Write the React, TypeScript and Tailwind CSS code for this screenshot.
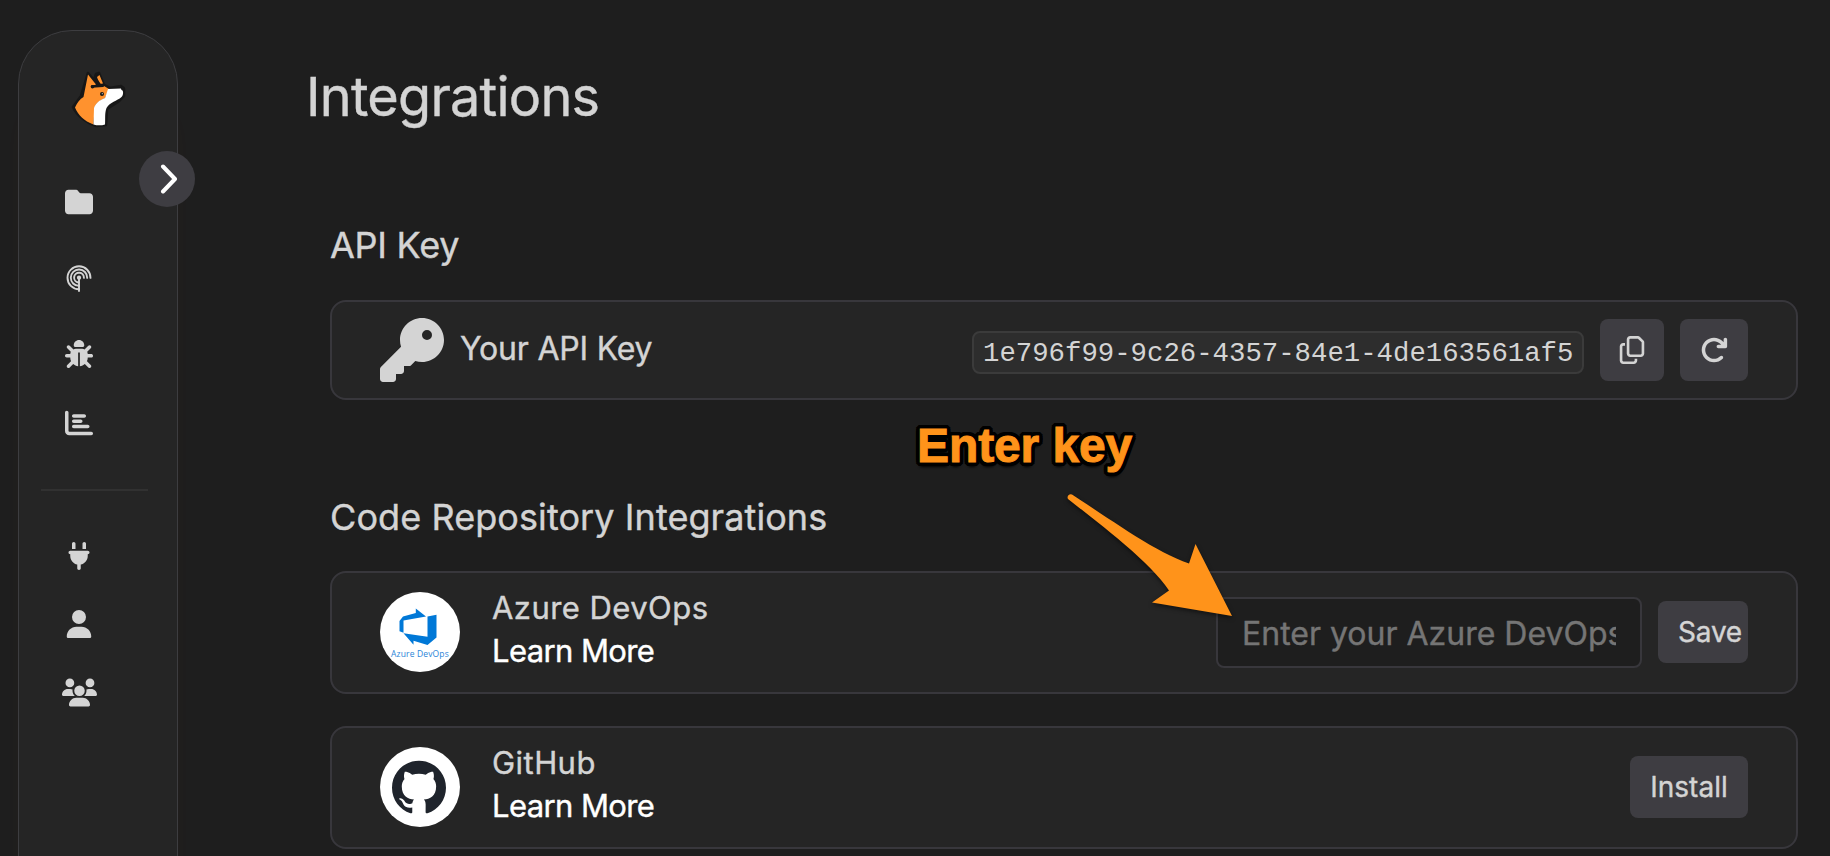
import type { ReactNode } from "react";
import {
  FaArrowRotateRight,
  FaBug,
  FaChartBar,
  FaFolder,
  FaKey,
  FaPlug,
  FaRegCopy,
  FaUser,
  FaUsers,
} from "react-icons/fa6";
import { SiGithub } from "react-icons/si";

function FoxLogo() {
  return (
    <svg width="56" height="60" viewBox="70 69 56 60" className="block">
      <path
        d="M88 73 L94 80 L96 74 L99 73 L104 85 L110 88 L121 86 L124 89 L124 96 L118 102 L107 109 L106 125 L96 126 C87 123 77 116 73 107 L81 96 Z"
        fill="#171717"
        stroke="#171717"
        strokeWidth="2.600"
        strokeLinejoin="round"
      />
      <path
        d="M88 74.500 L96 84.500 L92 86 L104 86 L109 89 L105 98 C98 101 95 105 94.500 108 L93.500 124.500 C84 121 78 115 75 107.500 C77 103 80 99 83.500 97 Z"
        fill="#ff922e"
      />
      <path d="M97 77 L99.500 75 L103 83.500 L99.500 84 Z" fill="#ff922e" />
      <path
        d="M108 89 L121 88.500 C124 91 123.500 95 121.500 97 C117 101 110 102 106.500 108 C104.500 113 105.500 119 105 124.500 C101 125.800 97 125.500 93.500 124.500 L94 108 C95 104 100 99.500 105 98 Z"
        fill="#fff"
      />
      <path d="M92 86.500 L103 85.700 M96.500 80 L100 85" stroke="#171717" strokeWidth="2.400" fill="none" strokeLinecap="round" />
      <circle cx="92.500" cy="86.700" r="1.800" fill="#171717" />
      <circle cx="102" cy="94" r="2" fill="#171717" />
      <circle cx="102.300" cy="93.700" r="0.600" fill="#ccc" />
      <circle cx="123" cy="88.500" r="2" fill="#171717" />
    </svg>
  );
}

function RadarIcon() {
  return (
    <svg width="28" height="28" viewBox="0 0 28 28" fill="none" stroke="currentColor" strokeWidth="1.900" strokeLinecap="round">
      <path d="M14 25.300 A11.500 11.500 0 1 1 25.500 13.900" />
      <path d="M14 21.900 A8.200 8.200 0 1 1 22.200 13.900" />
      <path d="M13.500 18.500 A4.900 4.900 0 1 1 18.900 13.900" />
      <circle cx="14" cy="13.700" r="1.200" fill="currentColor" />
      <path d="M14 14 V27" />
    </svg>
  );
}

function AzureLogo() {
  return (
    <div className="flex h-20 w-20 flex-col items-center rounded-full bg-white pt-4">
      <svg width="38" height="38" viewBox="0 0 38 38" className="mr-1 block shrink-0" fill="#0078d7">
        <path d="M0.500 13 L4 8.500 L16.800 5 L16.800 0.500 L27 8.500 L4.500 12.500 L4.500 24.700 L0.500 23.300 Z" />
        <path d="M28.500 8.500 L37.500 6.800 L37.500 29.500 L28.500 37 L14.500 32.700 L14.500 36.700 L4.500 25.300 L28.500 28.700 Z" />
      </svg>
      <span className="mt-[2px] font-['Open_Sans',sans-serif] text-[8.5px] leading-[11px] tracking-[0.15px] whitespace-nowrap text-[#2b85d8] [-webkit-text-stroke:0]">
        Azure DevOps
      </span>
    </div>
  );
}

function GithubLogo() {
  return (
    <div className="flex h-20 w-20 items-center justify-center rounded-full bg-white pt-[1px] pr-[3px] text-[#1f242c]">
      <SiGithub size={54} />
    </div>
  );
}

function NavItem({ className, children }: { className: string; children: ReactNode }) {
  return <a className={`flex h-7 w-9 items-center justify-center ${className}`}>{children}</a>;
}

function Sidebar() {
  return (
    <aside className="relative mt-[30px] ml-[18px] h-[900px] w-40 shrink-0 rounded-t-[54px] border border-[#3d3d40] bg-[#252525] shadow-[0_60px_14px_rgba(255,120,60,0.03)]">
      <div className="mt-[38px] ml-[51px]">
        <FoxLogo />
      </div>
      <button className="absolute top-[120px] left-[120px] flex h-14 w-14 items-center justify-center rounded-full bg-[#3e3d42]">
        <svg width="20" height="30" viewBox="0 0 20 30" fill="none" stroke="#fff" strokeWidth="4" strokeLinecap="round" strokeLinejoin="round">
          <path d="M6 2.500 L18 15 L6 27.500" />
        </svg>
      </button>
      <nav className="ml-[42px] flex flex-col text-[#d4d4d4]">
        <NavItem className="mt-[59px]"><FaFolder size={28} /></NavItem>
        <NavItem className="mt-[48px]"><RadarIcon /></NavItem>
        <NavItem className="mt-[48px]"><FaBug size={28} /></NavItem>
        <NavItem className="mt-[41px]"><FaChartBar size={28} /></NavItem>
      </nav>
      <div className="mt-[52px] ml-[22px] h-[2px] w-[107px] bg-[#313131]" />
      <nav className="ml-[42px] flex flex-col text-[#d4d4d4]">
        <NavItem className="mt-[51px]"><FaPlug size={28} /></NavItem>
        <NavItem className="mt-[40px]"><FaUser size={28} /></NavItem>
        <NavItem className="mt-[40px]"><FaUsers size={35} className="shrink-0" /></NavItem>
      </nav>
    </aside>
  );
}

function Card({ className, children }: { className: string; children: ReactNode }) {
  return (
    <div className={`flex w-[1468px] items-center rounded-2xl border-2 border-[#38373c] bg-[#252525] pr-12 pl-12 ${className}`}>
      {children}
    </div>
  );
}

function Provider({ name, logo }: { name: string; logo: ReactNode }) {
  return (
    <div className="flex flex-1 items-center gap-8">
      {logo}
      <div className="-mt-[5px] flex flex-col text-[31px] leading-[43px]">
        <span className="tracking-[0.45px]">{name}</span>
        <a className="tracking-[-0.6px] text-white">Learn More</a>
      </div>
    </div>
  );
}

export default function App() {
  return (
    <div className="relative flex h-[856px] w-[1830px] overflow-hidden bg-[#1e1e1e] font-['Inter',sans-serif] text-[#d4d4d4] [-webkit-text-stroke:0.4px_currentColor]">
      <Sidebar />
      <main className="ml-[128px] flex flex-col">
        <h1 className="mt-[65px] text-[54px] leading-[64px] tracking-[-0.75px]">Integrations</h1>
        <section className="ml-6">
          <h2 className="mt-[94px] text-[36px] leading-[44px] tracking-[-0.25px]">API Key</h2>
          <Card className="mt-[33px] h-[100px]">
            <FaKey size={64} />
            <span className="-mt-[2px] ml-4 flex-1 text-[32px] leading-[40px] tracking-[-0.2px]">Your API Key</span>
            <code className="mt-[5px] flex h-[43px] w-[612px] items-center rounded-lg border-2 border-[#3b3b3b] bg-[#2d2d2d] pt-[3px] pl-[9px] font-['Liberation_Mono',monospace] text-[27.33px] whitespace-nowrap [-webkit-text-stroke:0]">
              1e796f99-9c26-4357-84e1-4de163561af5
            </code>
            <button className="ml-4 flex h-[62px] w-16 items-center justify-center rounded-lg bg-[#3e3d42]">
              <FaRegCopy size={28} />
            </button>
            <button className="ml-4 flex h-[62px] w-[68px] items-center justify-center rounded-lg bg-[#3e3d42]">
              <FaArrowRotateRight size={28} />
            </button>
          </Card>
        </section>
        <section className="ml-6">
          <h2 className="mt-[95px] text-[36px] leading-[44px] tracking-[0.08px]">Code Repository Integrations</h2>
          <Card className="mt-[32px] h-[123px] pb-[2px]">
            <Provider name="Azure DevOps" logo={<AzureLogo />} />
            <input
              readOnly
              placeholder="Enter your Azure DevOps token"
              className="mt-[2px] h-[71px] w-[426px] rounded-lg border-2 border-[#38373c] bg-[#1e1e1e] px-6 pt-[2px] text-[32px] placeholder:text-[#757575]"
            />
            <button className="ml-4 flex h-[62px] w-[90px] items-center rounded-lg bg-[#3e3d42] pl-5 text-[28px] tracking-[-0.2px]">
              Save
            </button>
          </Card>
          <Card className="mt-[32px] h-[123px] pb-[2px]">
            <Provider name="GitHub" logo={<GithubLogo />} />
            <button className="flex h-[62px] w-[118px] items-center justify-center rounded-lg bg-[#3e3d42] text-[28px]">
              Install
            </button>
          </Card>
        </section>
      </main>
      <div className="absolute top-[418px] left-[917px] font-['Liberation_Sans',sans-serif] text-[48px] leading-[56px] font-bold tracking-[-0.1px] whitespace-nowrap text-[#ff931a] [-webkit-text-stroke:1px_#ff931a] [text-shadow:4px_0_#000,-4px_0_#000,0_4px_#000,0_-4px_#000,3px_3px_#000,-3px_3px_#000,3px_-3px_#000,-3px_-3px_#000,2px_4px_#000,-2px_4px_#000,2px_-4px_#000,-2px_-4px_#000,4px_2px_#000,4px_-2px_#000,-4px_2px_#000,-4px_-2px_#000,0_5px_3px_#000]">
        Enter key
      </div>
      <svg className="absolute top-[485px] left-[1060px] drop-shadow-[0_2px_2px_rgba(0,0,0,0.5)]" width="180" height="140" viewBox="1060 485 180 140">
        <path
          d="M1072 494.500 C1110 519 1155 552 1189 563.500 L1195.500 544 L1232 616 L1152 602.500 L1169 590.500 C1150 562 1105 528 1068 499 A3.200 3.200 0 0 1 1072 494.500 Z"
          fill="#ff931a"
        />
      </svg>
    </div>
  );
}
